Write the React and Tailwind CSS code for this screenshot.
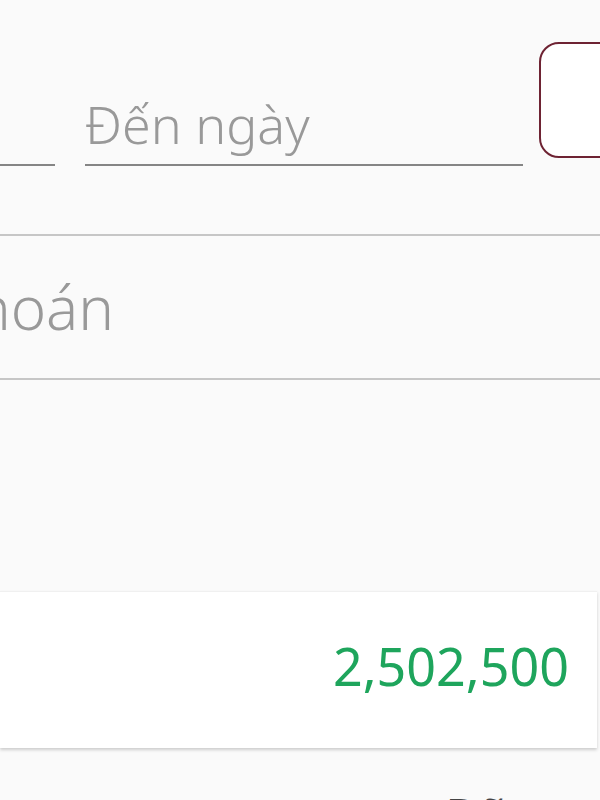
export default function App() {
  return (
    <div className="relative h-[800px] w-[600px] overflow-hidden bg-[#fafafa]" style={{ fontFamily: '"Noto Sans", "Open Sans", sans-serif' }}>
      {/* Date row */}
      <div className="flex items-start pt-[42px]">
        <div className="h-[124px] w-[55px] shrink-0 border-b-2 border-[#858585]" />
        <div className="ml-[30px] flex h-[124px] w-[438px] shrink-0 flex-col justify-end border-b-2 border-[#858585] pb-[8px]">
          <span className="text-[52px] font-light leading-[64px] text-[#999999]">Đến ngày</span>
        </div>
        <div className="ml-[16px] h-[116px] w-[120px] shrink-0 rounded-[20px] border-2 border-[#6e2333] bg-white" />
      </div>

      {/* Stock code field */}
      <div className="mt-[68px] h-[2px] w-full bg-[#c6c6c6]" />
      <div className="flex h-[142px] items-center">
        <div className="flex w-[114px] shrink-0 justify-end whitespace-nowrap text-[60px] font-light leading-[72px] text-[#999999]">
          Mã chứng khoán
        </div>
      </div>
      <div className="h-[2px] w-full bg-[#c6c6c6]" />

      {/* Summary card */}
      <div className="mt-[211px] flex h-[157px] w-[597px] items-center justify-end border-t border-[#f0f0f0] bg-white pb-[8px] pr-[28px] shadow-[0_2px_3px_rgba(0,0,0,0.18)]">
        <span className="text-[52px] leading-[64px] text-[#1ea55c]">2,502,500</span>
      </div>

      {/* Next row, clipped */}
      <div className="mt-[35px] whitespace-nowrap pl-[445px] text-[48px] leading-[64px] text-[#444444]">
        Đã nạp
      </div>
    </div>
  );
}
